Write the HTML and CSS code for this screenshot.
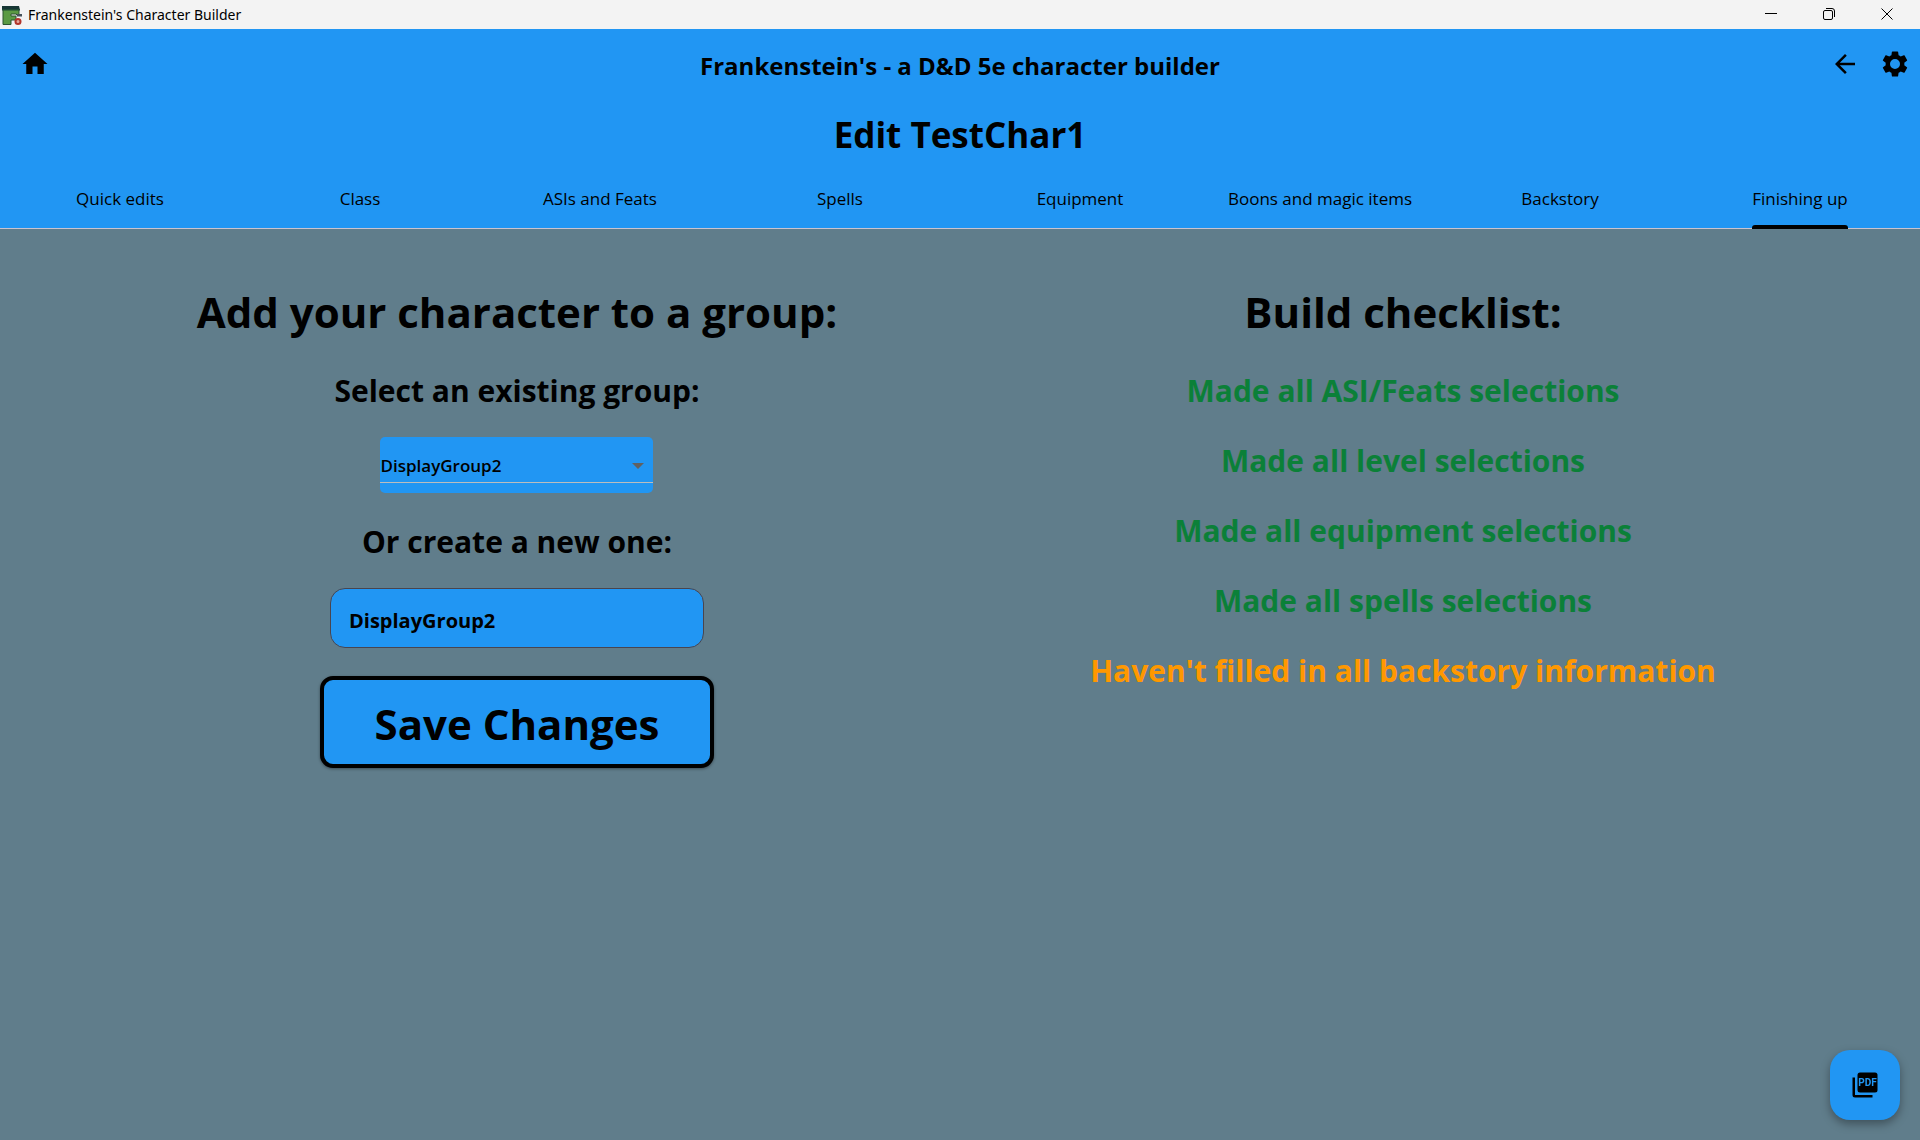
FILE: index.html
```html
<!DOCTYPE html>
<html lang="en">
<head>
<meta charset="utf-8">
<meta name="viewport" content="width=device-width, initial-scale=1">
<title>Frankenstein's Character Builder</title>
<link rel="stylesheet" href="styles.css">
</head>
<body>
<div class="titlebar">
  <svg class="app-icon" viewBox="0 0 20 20" aria-hidden="true">
    <path d="M0 1h17l1 4H0z" fill="#173634"/>
    <path d="M1 4.500h16v5.500h-2.500V9H9v2h5v4H9v4.500H1z" fill="#5b9a43" stroke="#2c5530"/>
    <path d="M0 4h18v1.500H0z" fill="#1f4a35"/>
    <path d="M15 9h5v2.500h-5z" fill="#46525a"/>
    <circle cx="16" cy="16.500" r="2.500" fill="#e3a79b" stroke="#b3352b" stroke-width="2"/>
  </svg>
  <span class="app-name">Frankenstein's Character Builder</span>
  <div class="window-controls">
    <button class="window-button" type="button" aria-label="Minimize"><svg viewBox="0 0 12 12"><path d="M0 5.500h12"/></svg></button>
    <button class="window-button" type="button" aria-label="Restore"><svg viewBox="0 0 12 12"><rect x=".5" y="2.500" width="9" height="9" rx="1.500"/><path d="M3 .5h6a2.500 2.500 0 0 1 2.500 2.500v6"/></svg></button>
    <button class="window-button" type="button" aria-label="Close"><svg viewBox="0 0 12 12"><path d="M.5.5l11 11M11.500.5l-11 11"/></svg></button>
  </div>
</div>

<header class="header">
  <div class="appbar">
    <div class="actions">
      <button class="icon-button" type="button" aria-label="Home"><svg viewBox="0 0 24 24"><path d="M10 20v-6h4v6h5v-8h3L12 3 2 12h3v8z"/></svg></button>
    </div>
    <p class="appbar-title">Frankenstein's - a D&amp;D 5e character builder</p>
    <div class="actions actions-end">
      <button class="icon-button" type="button" aria-label="Back"><svg viewBox="0 0 24 24"><path d="M20 11H7.830l5.590-5.590L12 4l-8 8 8 8 1.410-1.410L7.830 13H20v-2z"/></svg></button>
      <button class="icon-button" type="button" aria-label="Settings"><svg viewBox="0 0 24 24"><path fill-rule="evenodd" d="M19.500 12c0-.34-.03-.66-.07-1l2.110-1.630c.19-.15.24-.42.120-.64l-2-3.460c-.12-.22-.39-.31-.61-.22l-2.490 1c-.52-.39-1.060-.73-1.690-.98l-.37-2.650A.506.506 0 0 0 14 2h-4c-.25 0-.46.18-.5.42l-.37 2.650c-.63.25-1.170.59-1.690.98l-2.490-1c-.22-.09-.49 0-.61.22l-2 3.460c-.13.22-.07.49.120.64L4.570 11c-.04.34-.07.67-.07 1s.03.65.07.970l-2.110 1.660c-.19.15-.25.42-.12.640l2 3.460c.12.22.39.3.61.22l2.490-1.010c.52.4 1.060.740 1.690.990l.37 2.650c.04.240.250.420.5.420h4c.25 0 .46-.18.5-.42l.37-2.650c.63-.26 1.170-.59 1.690-.99l2.490 1.010c.22.08.49 0 .61-.22l2-3.460c.12-.22.07-.49-.12-.64l-2.110-1.660c.04-.32.070-.640.070-.970zM12 16a4 4 0 1 1 0-8 4 4 0 0 1 0 8z"/></svg></button>
    </div>
  </div>
  <h1 class="page-title">Edit TestChar1</h1>
  <nav class="tabs" aria-label="Character sections">
    <a class="tab" href="#quick">Quick edits</a>
    <a class="tab" href="#class">Class</a>
    <a class="tab" href="#feats">ASIs and Feats</a>
    <a class="tab" href="#spells">Spells</a>
    <a class="tab" href="#equipment">Equipment</a>
    <a class="tab" href="#boons">Boons and magic items</a>
    <a class="tab" href="#backstory">Backstory</a>
    <a class="tab tab-active" href="#finish" aria-current="page">Finishing up</a>
  </nav>
</header>

<main class="content">
  <section class="column">
    <h2 class="heading">Add your character to a group:</h2>
    <form class="groups">
      <div class="field">
        <label class="subheading" for="group">Select an existing group:</label>
        <div class="dropdown">
          <select class="dropdown-select" id="group"><option>DisplayGroup2</option></select>
          <svg class="dropdown-arrow" viewBox="0 0 12 6" aria-hidden="true"><path d="M0 0h12L6 6z"/></svg>
        </div>
      </div>
      <div class="field">
        <label class="subheading" for="new-group">Or create a new one:</label>
        <input class="text-input" id="new-group" type="text" value="DisplayGroup2">
      </div>
      <button class="save-button" type="button">Save Changes</button>
    </form>
  </section>
  <section class="column">
    <h2 class="heading">Build checklist:</h2>
    <ul class="checklist">
      <li class="subheading done">Made all ASI/Feats selections</li>
      <li class="subheading done">Made all level selections</li>
      <li class="subheading done">Made all equipment selections</li>
      <li class="subheading done">Made all spells selections</li>
      <li class="subheading pending">Haven't filled in all backstory information</li>
    </ul>
  </section>
</main>

<button class="fab" type="button" aria-label="Export to PDF">
  <svg viewBox="0 0 30 30">
    <path d="M2.500 7.500H5V25h17.500v2.500H5A2.500 2.500 0 0 1 2.500 25z"/>
    <rect x="7.500" y="2.500" width="20" height="20" rx="2.500"/>
    <text class="fab-text" x="17.500" y="16" text-anchor="middle">PDF</text>
  </svg>
</button>
</body>
</html>
```

FILE: styles.css
```css
* { box-sizing: border-box; }

body {
  margin: 0;
  min-height: 100vh;
  background: #607d8b;
  color: #000;
  font-family: "Open Sans", "Noto Sans", sans-serif;
}

button, input, select { font: inherit; color: inherit; }
button { padding: 0; border: 0; background: none; }
h1, h2, p, ul { margin: 0; padding: 0; }

.titlebar {
  display: flex;
  align-items: center;
  height: 29px;
  padding: 0 4px 0 2px;
  gap: 6px;
  background: #f3f3f3;
}
.app-icon { width: 20px; height: 20px; }
.app-name { font-family: "Noto Sans", sans-serif; font-size: 14px; line-height: 20px; }
.window-controls { display: flex; margin-left: auto; height: 28px; align-self: flex-start; }
.window-button { display: grid; place-items: center; width: 58px; }
.window-button svg { width: 12px; height: 12px; fill: none; stroke: #000; }

.header { background: #2196f3; border-bottom: 1px solid #cac4d0; }
.appbar {
  display: grid;
  grid-template-columns: 1fr auto 1fr;
  align-items: center;
  height: 70px;
  padding: 0 0 0 10px;
}
.actions { display: flex; }
.actions-end { justify-content: flex-end; padding-left: 10px; }
.icon-button { display: grid; place-items: center; width: 50px; height: 50px; }
.icon-button svg { width: 30px; height: 30px; }
.appbar { padding-right: 0; }
.appbar-title { margin-left: -10px; font-size: 24px; font-weight: 700; line-height: 32px; padding-top: 4px; }
.page-title { font-size: 35px; font-weight: 700; line-height: 48px; padding-top: 12px; text-align: center; }

.tabs { display: grid; grid-template-columns: repeat(8, 1fr); height: 69px; }
.tab {
  position: relative;
  justify-self: center;
  padding-top: 28px;
  font-size: 17px;
  font-weight: 500;
  line-height: 24px;
  color: #000;
  text-decoration: none;
  white-space: nowrap;
}
.tab-active::after {
  content: "";
  position: absolute;
  left: 0;
  right: 0;
  bottom: -1px;
  height: 4px;
  border-radius: 3px 3px 0 0;
  background: #000;
}

.content {
  display: grid;
  grid-template-columns: 1fr 1fr;
  padding: 53px 74px;
}
.column { display: flex; flex-direction: column; align-items: center; gap: 28px; }
.heading { font-size: 42px; font-weight: 700; line-height: 60px; white-space: nowrap; }
.subheading { font-size: 30px; font-weight: 700; line-height: 42px; white-space: nowrap; }
.groups, .checklist { display: flex; flex-direction: column; align-items: center; gap: 28px; }
.checklist { list-style: none; }
.field { display: flex; flex-direction: column; align-items: center; gap: 25px; }
.done { color: #0b8038; }
.pending { color: #ff9800; }

.dropdown {
  position: relative;
  width: 273px;
  height: 56px;
  border-radius: 5px;
  background: #2196f3;
}
.dropdown-select {
  appearance: none;
  width: 100%;
  height: 46px;
  padding: 12px 0 0;
  border: 0;
  border-bottom: 1px solid #bdbdbd;
  background: none;
  font-size: 17px;
  font-weight: 600;
}
.dropdown-arrow { position: absolute; right: 9px; top: 26px; width: 12px; height: 6px; fill: #616161; }

.text-input {
  width: 374px;
  height: 60px;
  padding: 4px 18px 0;
  border: 1px solid #49454f;
  border-radius: 15px;
  background: #2196f3;
  font-size: 20px;
  font-weight: 700;
}

.save-button {
  width: 394px;
  height: 92px;
  padding-top: 4px;
  border: 4px solid #000;
  border-radius: 13px;
  background: #2196f3;
  box-shadow: 0 1px 3px rgba(0, 0, 0, 0.4);
  font-size: 42px;
  font-weight: 700;
  line-height: 60px;
}

.fab {
  position: fixed;
  right: 20px;
  bottom: 20px;
  display: grid;
  place-items: center;
  width: 70px;
  height: 70px;
  border-radius: 20px;
  background: #2196f3;
  box-shadow: 0 4px 10px rgba(0, 0, 0, 0.35);
}
.fab svg { width: 30px; height: 30px; }
.fab-text { fill: #2196f3; font-family: Roboto, sans-serif; font-size: 10px; font-weight: 700; }
```
